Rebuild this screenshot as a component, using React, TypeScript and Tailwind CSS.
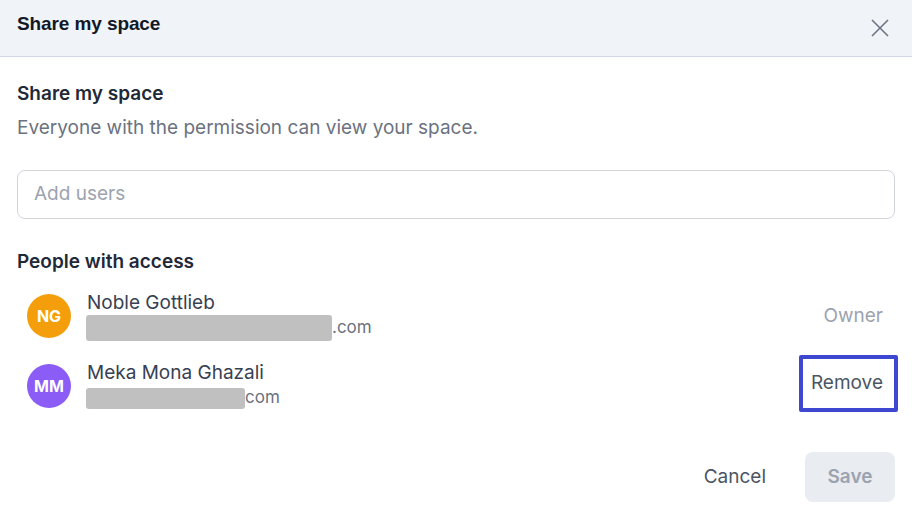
import React from 'react';

const font = { fontFamily: 'Inter, "Noto Sans", sans-serif' };

function Avatar({ initials, color }: { initials: string; color: string }) {
  return (
    <div className={`w-[44px] h-[44px] rounded-full flex items-center justify-center text-white text-[16px] font-bold shrink-0 ${color}`}>
      {initials}
    </div>
  );
}

export default function App() {
  return (
    <div className="w-[912px] h-[523px] bg-white text-[#1f2937] overflow-hidden" style={font}>
      {/* header */}
      <div className="h-[57px] flex items-center justify-between pl-[17px] pr-[22px] pb-[7px] bg-[#f0f3f8] border-b border-[#d3d9e2]">
        <h1
          className="text-[19px] font-bold text-[#111827] tracking-[-0.1px]"
          style={{ fontFamily: '"Liberation Sans", Arial, sans-serif' }}
        >
          Share my space
        </h1>
        <button className="w-[20px] h-[20px] mt-[7px] flex items-center justify-center text-[#6b7280]">
          <svg width="18" height="18" viewBox="0 0 18 18" fill="none" stroke="currentColor" strokeWidth="1.6">
            <line x1="1" y1="1" x2="17" y2="17" />
            <line x1="17" y1="1" x2="1" y2="17" />
          </svg>
        </button>
      </div>

      <div className="px-[17px] pt-[23px]">
        <h2 className="text-[19px] leading-[28px] font-semibold text-[#1f2937]">Share my space</h2>
        <p className="mt-[6px] text-[19px] leading-[28px] text-[#6b7280]">
          Everyone with the permission can view your space.
        </p>

        <div className="mt-[28px] h-[49px] rounded-lg border border-[#d1d5db] flex items-center px-[16px]">
          <input
            className="w-full outline-none text-[19px] placeholder:text-[#9ca3af]"
            placeholder="Add users"
          />
        </div>

        <h3 className="mt-[29px] text-[19px] leading-[28px] font-semibold text-[#1f2937]">People with access</h3>

        <div className="mt-[12px] flex flex-col gap-[14px]">
          <div className="h-[56px] flex items-center justify-between pl-[10px]">
            <div className="flex items-center gap-[16px]">
              <Avatar initials="NG" color="bg-[#f59e0b]" />
              <div className="flex flex-col">
                <span className="text-[19px] leading-[24px] text-[#374151]">Noble Gottlieb</span>
                <div className="flex items-center text-[17px] text-[#6b7280]">
                  <span className="-ml-[1px] w-[246px] h-[26px] rounded-[3px] bg-[#c0c0c0]" />
                  <span>.com</span>
                </div>
              </div>
            </div>
            <span className="mr-[12px] text-[19px] text-[#9ca3af]">Owner</span>
          </div>

          <div className="h-[56px] flex items-center justify-between pl-[10px]">
            <div className="flex items-center gap-[16px]">
              <Avatar initials="MM" color="bg-[#8b5cf6]" />
              <div className="flex flex-col">
                <span className="text-[19px] leading-[24px] text-[#374151]">Meka Mona Ghazali</span>
                <div className="flex items-center text-[17px] text-[#6b7280]">
                  <span className="-ml-[1px] w-[159px] h-[21px] rounded-[3px] bg-[#c0c0c0]" />
                  <span>com</span>
                </div>
              </div>
            </div>
            <button className="-mr-[3px] mb-[6px] h-[57px] border-[4px] border-[#3e47d0] rounded-[2px] pl-[8px] pr-[11px] text-[19px] text-[#4b5563]">
              Remove
            </button>
          </div>
        </div>

        <div className="mt-[38px] flex items-center justify-end gap-[27px]">
          <button className="px-[12px] h-[50px] text-[19px] text-[#4b5563]">Cancel</button>
          <button className="w-[90px] h-[50px] rounded-lg bg-[#e9ecf1] text-[19px] font-semibold text-[#9ca3af]">
            Save
          </button>
        </div>
      </div>
    </div>
  );
}
